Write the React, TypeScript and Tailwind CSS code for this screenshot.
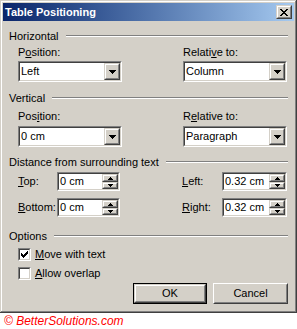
import React from "react";

const Arrow = () => (
  <svg width="7" height="4" viewBox="0 0 7 4" className="block">
    <path d="M0 0h7v1H0zM1 1h5v1H1zM2 2h3v1H2zM3 3h1v1H3z" fill="#000" />
  </svg>
);

const SmallUp = () => (
  <svg width="5" height="3" viewBox="0 0 5 3" className="block">
    <path d="M2 0h1v1H2zM1 1h3v1H1zM0 2h5v1H0z" fill="#000" />
  </svg>
);
const SmallDown = () => (
  <svg width="5" height="3" viewBox="0 0 5 3" className="block">
    <path d="M0 0h5v1H0zM1 1h3v1H1zM2 2h1v1H2z" fill="#000" />
  </svg>
);

function Raised({ children, className = "" }: { children?: React.ReactNode; className?: string }) {
  return (
    <div
      className={
        "flex border border-t-[#d4d0c8] border-l-[#d4d0c8] border-r-[#404040] border-b-[#404040] " + className
      }
    >
      <div className="flex-1 flex items-center justify-center bg-[#d4d0c8] border border-t-white border-l-white border-r-[#808080] border-b-[#808080]">
        {children}
      </div>
    </div>
  );
}

function Sunken({ children, className = "" }: { children?: React.ReactNode; className?: string }) {
  return (
    <div
      className={
        "flex border border-t-[#808080] border-l-[#808080] border-r-white border-b-white " + className
      }
    >
      <div className="flex-1 flex items-center bg-white border border-t-[#404040] border-l-[#404040] border-r-[#d4d0c8] border-b-[#d4d0c8]">
        {children}
      </div>
    </div>
  );
}

function Select({ value }: { value: string }) {
  return (
    <Sunken className="h-[21px] w-[104px]">
      <span className="pl-[1px] flex-1">{value}</span>
      <Raised className="w-[16px] h-[17px]">
        <Arrow />
      </Raised>
    </Sunken>
  );
}

function Spin({ value, w }: { value: string; w: string }) {
  return (
    <Sunken className={"h-[19px] " + w}>
      <span className="pl-[1px] flex-1">{value}</span>
      <div className="flex flex-col w-[16px] h-[15px]">
        <Raised className="w-[16px] h-[8px]">
          <SmallUp />
        </Raised>
        <Raised className="w-[16px] h-[7px]">
          <SmallDown />
        </Raised>
      </div>
    </Sunken>
  );
}

function Header({ children, className = "" }: { children: React.ReactNode; className?: string }) {
  return (
    <div className={"flex items-center h-[14px] " + className}>
      <span>{children}</span>
      <div className="flex-1 ml-[7px] h-[2px] border-t border-t-[#808080] border-b border-b-white" />
    </div>
  );
}

function Check({ checked }: { checked: boolean }) {
  return (
    <div className="w-[13px] h-[13px] flex border border-t-[#808080] border-l-[#808080] border-r-white border-b-white">
      <div className="flex-1 flex items-center justify-center bg-white border border-t-[#404040] border-l-[#404040] border-r-[#d4d0c8] border-b-[#d4d0c8]">
        {checked && (
          <svg width="7" height="7" viewBox="0 0 7 7" className="block">
            <path
              d="M6 0h1v3H6zM5 1h1v3H5zM4 2h1v3H4zM3 3h1v3H3zM2 4h1v3H2zM1 3h1v3H1zM0 2h1v3H0z"
              fill="#000"
            />
          </svg>
        )}
      </div>
    </div>
  );
}

export default function App() {
  return (
    <div className="w-[297px] h-[329px] bg-white font-['Liberation_Sans',Arial,sans-serif] text-[11px] leading-[13px] text-black">
      <div className="w-[297px] h-[313px] bg-[#d4d0c8] p-[3px] flex flex-col shadow-[inset_-1px_-1px_#404040,inset_1px_1px_#d4d0c8,inset_-2px_-2px_#808080,inset_2px_2px_#ffffff]">
        {/* Title bar */}
        <div className="h-[18px] flex items-center bg-gradient-to-r from-[#0a246a] to-[#a6caf0]">
          <span className="pl-[2px] text-white font-bold text-[11px]">Table Positioning</span>
          <Raised className="ml-auto mr-[2px] w-[16px] h-[14px]">
            <svg width="8" height="7" viewBox="0 0 8 7" className="block">
              <path
                d="M0 0h2v1H0zM6 0h2v1H6zM1 1h2v1H1zM5 1h2v1H5zM2 2h4v1H2zM3 3h2v1H3zM2 4h4v1H2zM1 5h2v1H1zM5 5h2v1H5zM0 6h2v1H0zM6 6h2v1H6z"
                fill="#000"
              />
            </svg>
          </Raised>
        </div>

        {/* Content */}
        <div className="flex flex-col pl-[6px] pr-[6px]">
          <Header className="mt-[8px]">Horizontal</Header>
          <div className="flex mt-[3px]">
            <div className="ml-[9px] w-[104px] flex flex-col">
              <div className="h-[13px]">
                P<span className="underline">o</span>sition:
              </div>
              <div className="mt-[2px]">
                <Select value="Left" />
              </div>
            </div>
            <div className="ml-[61px] w-[104px] flex flex-col">
              <div className="h-[13px]">
                Relati<span className="underline">v</span>e to:
              </div>
              <div className="mt-[2px]">
                <Select value="Column" />
              </div>
            </div>
          </div>

          <Header className="mt-[9px]">Vertical</Header>
          <div className="flex mt-[5px]">
            <div className="ml-[9px] w-[104px] flex flex-col">
              <div className="h-[13px]">
                Pos<span className="underline">i</span>tion:
              </div>
              <div className="mt-[3px]">
                <Select value="0 cm" />
              </div>
            </div>
            <div className="ml-[61px] w-[104px] flex flex-col">
              <div className="h-[13px]">
                R<span className="underline">e</span>lative to:
              </div>
              <div className="mt-[3px]">
                <Select value="Paragraph" />
              </div>
            </div>
          </div>

          <Header className="mt-[8px]">Distance from surrounding text</Header>
          <div className="flex mt-[3px] items-center">
            <div className="ml-[9px] w-[39px]">
              <span className="underline">T</span>op:
            </div>
            <Spin value="0 cm" w="w-[63px]" />
            <div className="ml-[62px] w-[40px]">
              <span className="underline">L</span>eft:
            </div>
            <Spin value="0.32 cm" w="w-[65px]" />
          </div>
          <div className="flex mt-[7px] items-center">
            <div className="ml-[9px] w-[39px]">
              <span className="underline">B</span>ottom:
            </div>
            <Spin value="0 cm" w="w-[63px]" />
            <div className="ml-[62px] w-[40px]">
              <span className="underline">R</span>ight:
            </div>
            <Spin value="0.32 cm" w="w-[65px]" />
          </div>

          <Header className="mt-[12px]">Options</Header>
          <div className="flex items-center mt-[5px] ml-[9px] h-[13px]">
            <Check checked={true} />
            <span className="ml-[4px]">
              <span className="underline">M</span>ove with text
            </span>
          </div>
          <div className="flex items-center mt-[6px] ml-[9px] h-[13px]">
            <Check checked={false} />
            <span className="ml-[4px]">
              <span className="underline">A</span>llow overlap
            </span>
          </div>
          <div className="flex justify-end mt-[3px] mr-[0px]">
            <div className="w-[74px] h-[21px] border border-black flex">
              <Raised className="flex-1">OK</Raised>
            </div>
            <div className="ml-[6px] w-[75px] h-[21px] flex border border-t-white border-l-white border-r-[#404040] border-b-[#404040]">
              <div className="flex-1 flex items-center justify-center border border-t-[#d4d0c8] border-l-[#d4d0c8] border-r-[#808080] border-b-[#808080]">
                Cancel
              </div>
            </div>
          </div>
        </div>
      </div>
      <div className="pl-[4px] h-[16px] flex items-center italic text-[12px] text-[#ff0000]">
        © BetterSolutions.com
      </div>
    </div>
  );
}
